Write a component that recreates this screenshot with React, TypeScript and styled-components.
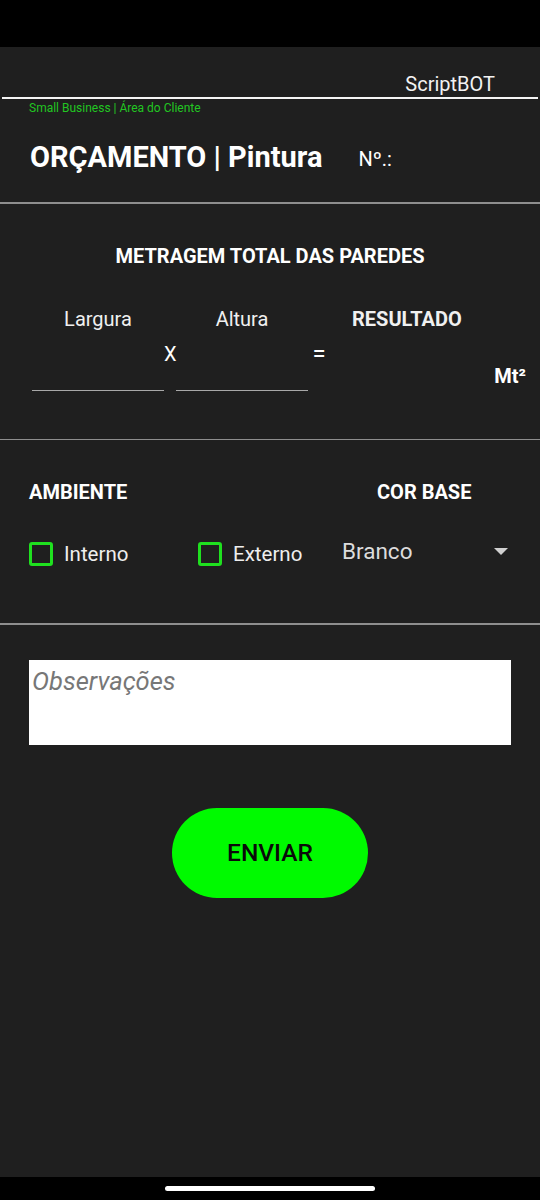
import styled, { createGlobalStyle } from 'styled-components';

const GlobalStyle = createGlobalStyle`
    * {
        box-sizing: border-box;
    }
    body {
        margin: 0;
        background: #000;
        font-family: Roboto, "Noto Sans", "Liberation Sans", sans-serif;
    }
`;

const Screen = styled.div`
    width: 540px;
    height: 1200px;
    display: flex;
    flex-direction: column;
    background: #000;
`;

const StatusBar = styled.div`
    height: 47px;
    background: #000;
`;

const Content = styled.main`
    flex: 1;
    background: #1f1f1f;
    color: #fff;
    display: flex;
    flex-direction: column;
`;

const NavBar = styled.div`
    height: 23px;
    background: #000;
    display: flex;
    justify-content: center;
    padding-top: 9px;
`;

const NavPill = styled.div`
    width: 210px;
    height: 5px;
    border-radius: 3px;
    background: #fff;
`;

const Brand = styled.div`
    padding: 25px 45px 0 0;
    text-align: right;
    font-size: 20px;
    line-height: 24px;
    color: #f2f2f2;
`;

const BrandLine = styled.div`
    height: 2px;
    margin: 1px 2px 0;
    background: #f4f4f4;
`;

const Tagline = styled.div`
    padding-left: 29px;
    margin-top: 2px;
    font-size: 12px;
    line-height: 14px;
    color: #22c622;
`;

const TitleRow = styled.div`
    display: flex;
    align-items: center;
    padding-left: 30px;
    margin-top: 27px;
    height: 30px;
`;

const Title = styled.h1`
    margin: 0;
    font-size: 29px;
    font-weight: 700;
    line-height: 30px;
`;

const Number = styled.span`
    margin-left: 36px;
    margin-top: 4px;
    font-size: 20px;
`;

const Divider = styled.hr<{ $top: number }>`
    margin: ${props => props.$top}px 0 0;
    border: none;
    height: 1.5px;
    background: #8e8e8e;
`;

const SectionTitle = styled.h2`
    margin: 41px 0 0;
    text-align: center;
    font-size: 20px;
    font-weight: 700;
    line-height: 22px;
`;

const CalcGrid = styled.div`
    display: grid;
    grid-template-columns: 132px 12px 132px 22px 1fr;
    grid-template-rows: 22px 61px;
    margin: 41px 0 0 32px;
`;

const FieldLabel = styled.div<{ $bold?: boolean; $col: number }>`
    grid-column: ${props => props.$col};
    grid-row: 1;
    font-size: 20px;
    line-height: 22px;
    font-weight: ${props => (props.$bold ? 700 : 400)};
    text-align: ${props => (props.$bold ? 'left' : 'center')};
    padding-left: ${props => (props.$bold ? '22px' : '0')};
    color: #f0f0f0;
    white-space: nowrap;
`;

const LineInput = styled.input<{ $col: number }>`
    grid-column: ${props => props.$col};
    grid-row: 2;
    width: 100%;
    background: transparent;
    border: none;
    border-bottom: 1.5px solid #a8a8a8;
    color: #fff;
    font: inherit;
    outline: none;
`;

const Operator = styled.span<{ $col: number; $size?: number }>`
    grid-column: ${props => props.$col};
    grid-row: 2;
    align-self: start;
    margin-top: 14px;
    text-align: center;
    font-size: ${props => props.$size ?? 20}px;
    line-height: 20px;
`;

const Unit = styled.span`
    grid-column: 5;
    grid-row: 2;
    align-self: end;
    justify-self: end;
    margin: 0 14px 4px 0;
    font-size: 20px;
    font-weight: 700;
    line-height: 22px;
`;

const OptionsGrid = styled.div`
    display: grid;
    grid-template-columns: 307px 1fr;
    grid-template-rows: 22px 24px;
    row-gap: 39px;
    margin: 41px 0 0 29px;
`;

const OptionLabel = styled.div<{ $indent?: number }>`
    font-size: 20px;
    font-weight: 700;
    line-height: 22px;
    margin-left: ${props => props.$indent ?? 0}px;
`;

const CheckRow = styled.div`
    display: flex;
    align-items: center;
`;

const Check = styled.label<{ $width: number }>`
    display: flex;
    align-items: center;
    gap: 11px;
    width: ${props => props.$width}px;
    font-size: 20.5px;
    color: #eee;
`;

const Box = styled.span`
    width: 24px;
    height: 24px;
    border: 3px solid #1fe01f;
    border-radius: 3px;
`;

const Select = styled.div`
    display: flex;
    align-items: center;
    justify-content: space-between;
    width: 166px;
    margin-left: 6px;
    margin-top: -6px;
    font-size: 22.5px;
    color: #dcdcdc;
`;

const Arrow = styled.span`
    width: 0;
    height: 0;
    border-left: 7px solid transparent;
    border-right: 7px solid transparent;
    border-top: 7px solid #d0d0d0;
`;

const Notes = styled.textarea`
    display: block;
    margin: 35px 0 0 29px;
    width: 482px;
    height: 85px;
    padding: 6px 3px;
    border: none;
    border-radius: 0;
    resize: none;
    background: #fff;
    font-family: Roboto, "Noto Sans", sans-serif;
    font-size: 25.5px;
    line-height: 30px;
    outline: none;

    &::placeholder {
        color: #777;
        font-style: italic;
    }
`;

const SendButton = styled.button`
    display: block;
    margin: 63px auto 0;
    width: 196px;
    height: 90px;
    border: none;
    border-radius: 45px;
    background: #00fa00;
    color: #0a0a0a;
    font-family: Roboto, "Noto Sans", sans-serif;
    font-size: 24.5px;
    font-weight: 500;
    cursor: pointer;
`;

export default function App() {
    return (
        <Screen>
            <GlobalStyle />
            <StatusBar />
            <Content>
                <Brand>ScriptBOT</Brand>
                <BrandLine />
                <Tagline>Small Business | Área do Cliente</Tagline>
                <TitleRow>
                    <Title>ORÇAMENTO | Pintura</Title>
                    <Number>Nº.:</Number>
                </TitleRow>
                <Divider $top={30} />

                <SectionTitle>METRAGEM TOTAL DAS PAREDES</SectionTitle>
                <CalcGrid>
                    <FieldLabel $col={1}>Largura</FieldLabel>
                    <FieldLabel $col={3}>Altura</FieldLabel>
                    <FieldLabel $col={5} $bold>RESULTADO</FieldLabel>
                    <LineInput $col={1} />
                    <Operator $col={2}>X</Operator>
                    <LineInput $col={3} />
                    <Operator $col={4} $size={24}>=</Operator>
                    <Unit>Mt²</Unit>
                </CalcGrid>
                <Divider $top={48} />

                <OptionsGrid>
                    <OptionLabel>AMBIENTE</OptionLabel>
                    <OptionLabel $indent={41}>COR BASE</OptionLabel>
                    <CheckRow>
                        <Check $width={169}>
                            <Box />
                            Interno
                        </Check>
                        <Check $width={138}>
                            <Box />
                            Externo
                        </Check>
                    </CheckRow>
                    <Select>
                        Branco
                        <Arrow />
                    </Select>
                </OptionsGrid>
                <Divider $top={57} />

                <Notes placeholder="Observações" />
                <SendButton>ENVIAR</SendButton>
            </Content>
            <NavBar>
                <NavPill />
            </NavBar>
        </Screen>
    );
}
